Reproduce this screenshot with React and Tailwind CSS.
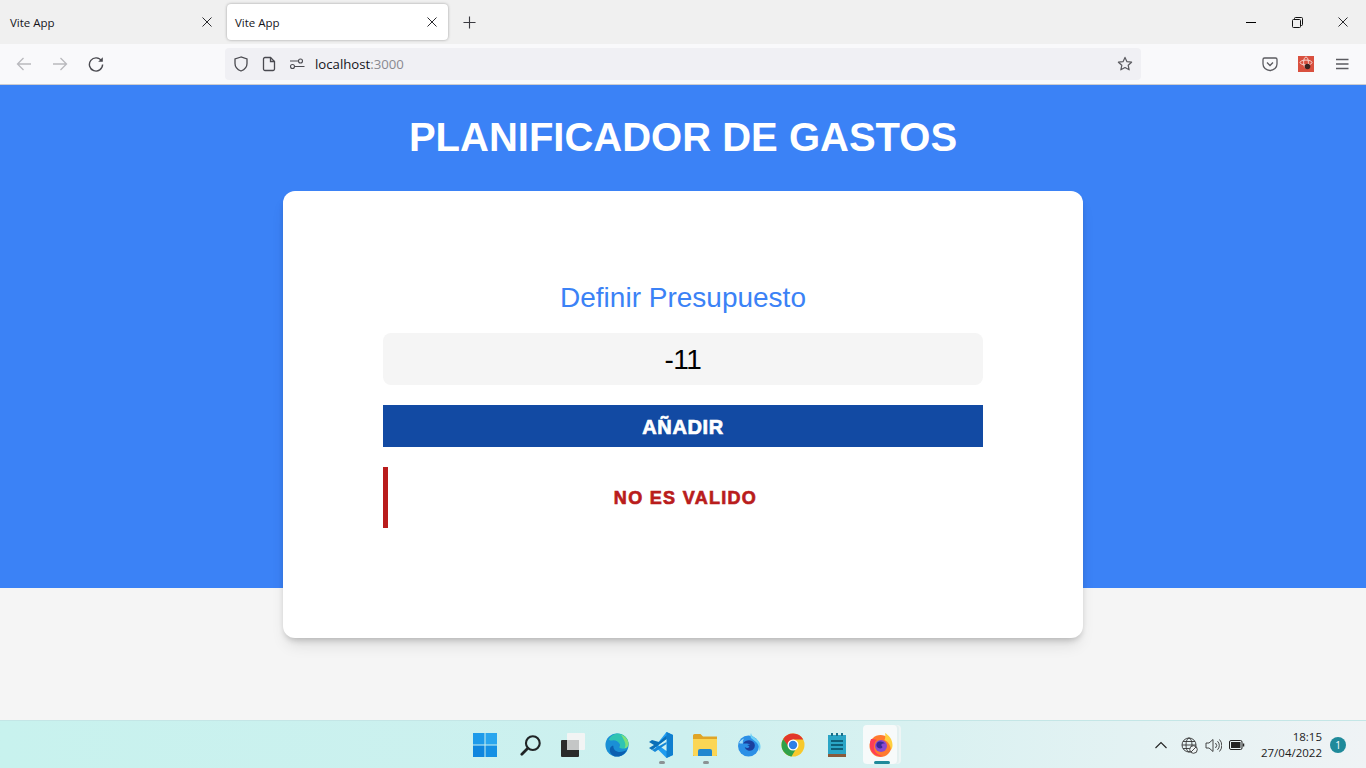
import React from 'react';

const XIcon = ({ size = 10, width = 1 }) => (
  <svg width={size} height={size} viewBox="0 0 10 10" fill="none" stroke="#2a2a2e" strokeWidth={width}>
    <path d="M0.5 0.5 9.5 9.5M9.5 0.5 0.5 9.5" />
  </svg>
);

const Tab = ({ active }) => (
  <div
    className={
      active
        ? 'w-[221px] h-9 mt-1 ml-px bg-white rounded shadow-[0_0_3px_rgba(0,0,0,0.35)] flex items-center justify-between pl-2 pr-[11px]'
        : 'w-[226px] h-9 mt-1 flex items-center justify-between pl-2.5 pr-[14px]'
    }
  >
    <span className="text-[11.5px] mt-px text-[#15141a] font-['Open_Sans',sans-serif]">Vite App</span>
    <XIcon />
  </div>
);

const ToolIcon = ({ children, className = '' }) => (
  <div className={`w-9 h-8 flex items-center justify-center ${className}`}>{children}</div>
);

const BrowserChrome = () => (
  <div className="h-[85px] shrink-0 border-b border-[#ccccd0]">
    <div className="h-11 bg-[#f0f0f0] flex">
      <Tab />
      <Tab active />
      <div className="w-[42px] h-11 flex items-center justify-center">
        <svg width="13" height="13" viewBox="0 0 14 14" stroke="#3a3a40" strokeWidth="1.2">
          <path d="M7 0.5v13M0.5 7h13" />
        </svg>
      </div>
      <div className="ml-auto flex items-center h-11">
        <div className="w-[46px] flex justify-center">
          <div className="w-2.5 h-px bg-black" />
        </div>
        <div className="w-[46px] flex justify-center">
          <svg width="11" height="11" viewBox="0 0 11 11" fill="none" stroke="#111" strokeWidth="1">
            <rect x="0.5" y="2.5" width="8" height="8" rx="1" />
            <path d="M2.5 2.5V1.5a1 1 0 0 1 1-1h6a1 1 0 0 1 1 1v6a1 1 0 0 1-1 1H8.5" />
          </svg>
        </div>
        <div className="w-[46px] flex justify-center">
          <XIcon size={10} width={1} />
        </div>
      </div>
    </div>
    <div className="h-10 bg-[#f9f9fb] flex items-center pl-1.5">
      <ToolIcon>
        <svg width="16" height="16" viewBox="0 0 16 16" fill="none" stroke="#b9b9bd" strokeWidth="1.3">
          <path d="M15 8H1.5M7.5 2 1.5 8l6 6" />
        </svg>
      </ToolIcon>
      <ToolIcon>
        <svg width="16" height="16" viewBox="0 0 16 16" fill="none" stroke="#b9b9bd" strokeWidth="1.3">
          <path d="M1 8h13.5M8.5 2l6 6-6 6" />
        </svg>
      </ToolIcon>
      <ToolIcon>
        <svg width="16" height="16" viewBox="0 0 16 16" fill="none" stroke="#4a4a50" strokeWidth="1.4">
          <path d="M13.6 5A6.6 6.6 0 1 0 14.6 8.6" />
          <path d="M14.8 1.2v4.6h-4.6z" fill="#4a4a50" stroke="none" />
        </svg>
      </ToolIcon>
      <div className="w-[916px] h-8 ml-[111px] bg-[#f0f0f4] rounded flex items-center">
        <div className="w-[32px] flex justify-center">
          <svg width="16" height="16" viewBox="0 0 16 16" fill="none" stroke="#4a4a50" strokeWidth="1.3">
            <path d="M8 1 2 3v4.5c0 3.6 2.6 6.2 6 7.5 3.4-1.3 6-3.9 6-7.5V3z" />
          </svg>
        </div>
        <div className="w-[24px] flex justify-center">
          <svg width="14" height="16" viewBox="0 0 14 16" fill="none" stroke="#4a4a50" strokeWidth="1.3">
            <path d="M3 1.500h5.500L12.500 5.500V13a1.500 1.500 0 0 1-1.500 1.500H3A1.500 1.500 0 0 1 1.500 13V3A1.500 1.500 0 0 1 3 1.500z" />
            <path d="M8.500 1.500v4h4" />
          </svg>
        </div>
        <div className="w-[32px] flex justify-center">
          <svg width="16" height="12" viewBox="0 0 16 12" fill="none" stroke="#4a4a50" strokeWidth="1.100">
            <circle cx="11.500" cy="3" r="2" />
            <circle cx="3.500" cy="8.500" r="2" />
            <path d="M1 3h8M6 8.500h9.500" />
          </svg>
        </div>
        <span className="ml-[2px] mt-px text-[13.2px] text-[#15141a] font-['Open_Sans',sans-serif]">
          localhost<span className="text-[#8a8a90]">:3000</span>
        </span>
        <div className="ml-auto mr-2 w-4 flex justify-center">
          <svg width="18" height="18" viewBox="0 0 17 17" fill="none" stroke="#5b5b60" strokeWidth="1.300">
            <path d="M8.500 1.500l2.100 4.500 4.900.6-3.600 3.300 1 4.800-4.400-2.400-4.400 2.400 1-4.800-3.600-3.300 4.900-.6z" strokeLinejoin="round" />
          </svg>
        </div>
      </div>
      <div className="ml-[111px] w-9 flex justify-center">
        <svg width="16" height="16" viewBox="0 0 16 16" fill="none" stroke="#5b5b60" strokeWidth="1.300">
          <path d="M2.500 2h11A1.500 1.500 0 0 1 15 3.500V8a7 6.500 0 0 1-14 0V3.500A1.500 1.500 0 0 1 2.500 2z" />
          <path d="M5 6.500 8 9.500l3-3" />
        </svg>
      </div>
      <div className="w-9 flex justify-center">
        <svg width="16" height="16" viewBox="0 0 16 16">
          <rect width="16" height="16" fill="#d9503f" />
          <ellipse cx="8" cy="6.500" rx="6" ry="2.400" fill="none" stroke="#f8e0dc" strokeWidth="0.900" />
          <ellipse cx="8" cy="6.500" rx="2.400" ry="5.500" fill="none" stroke="#f8e0dc" strokeWidth="0.900" />
          <circle cx="9.500" cy="10.500" r="2.800" fill="#3a2320" />
        </svg>
      </div>
      <div className="w-9 flex justify-center">
        <svg width="14" height="12" viewBox="0 0 14 12" stroke="#5b5b60" strokeWidth="1.300">
          <path d="M1 1.500h12.500M1 6h12.500M1 10.500h12.500" />
        </svg>
      </div>
    </div>
  </div>
);

const TaskIcon = ({ children, dot, active }) => (
  <div className="relative w-11 h-12 flex items-center justify-center">
    {active && (
      <div className="absolute left-[4px] top-[4px] w-[34px] h-[39px] bg-[#f7fafa] rounded shadow-[2px_0_0_#e4f0f0,4px_0_0_#eef5f5]" />
    )}
    <div className="relative">{children}</div>
    {dot && <div className="absolute bottom-[5px] left-[20px] w-[6px] h-[3px] rounded-full bg-[#8b9294]" />}
    {active && <div className="absolute bottom-[5px] left-[15px] w-4 h-[3px] rounded-full bg-[#1f8a9a]" />}
  </div>
);

const Taskbar = () => (
  <div className="h-12 shrink-0 grid grid-cols-[1fr_auto_1fr] bg-gradient-to-r from-[#c8f2ee] via-[#cdf0ef] to-[#eff3f5] border-t border-[#c4e6e6]">
    <div />
    <div className="flex">
      <TaskIcon>
        <svg width="24" height="24" viewBox="0 0 24 24">
          <path d="M0 0h11.500v11.500H0z" fill="#1e9bea" />
          <path d="M12.500 0H24v11.500H12.500z" fill="#2aa6ee" />
          <path d="M0 12.500h11.500V24H0z" fill="#0f86de" />
          <path d="M12.500 12.500H24V24H12.500z" fill="#1590e4" />
        </svg>
      </TaskIcon>
      <TaskIcon>
        <svg className="ml-1" width="22" height="24" viewBox="0 0 24 24" fill="none" stroke="#202426">
          <circle cx="14" cy="10" r="7.500" strokeWidth="2.300" />
          <path d="M8.500 15.500 2 22" strokeWidth="3" strokeLinecap="round" />
        </svg>
      </TaskIcon>
      <TaskIcon>
        <svg width="24" height="24" viewBox="0 0 24 24">
          <rect x="0" y="7" width="18" height="17" rx="1" fill="#2a2a2a" />
          <rect x="6" y="0" width="18" height="17" rx="1" fill="#f2f4f4" />
          <rect x="6" y="7" width="12" height="10" fill="#c4c6c6" />
        </svg>
      </TaskIcon>
      <TaskIcon>
        <svg width="24" height="24" viewBox="0 0 26 26">
          <circle cx="13" cy="13" r="12.500" fill="#1a8fd6" />
          <path d="M4 7C7 2 11 .5 14 .5c6 0 11.500 5 11.500 11 0 4-3 5.500-6 5.500-1.800 0-3.500-.5-4.200-1.500 1-1 1.200-2.200.7-3.500C14.500 9 11 7.500 8 8c-1.500.2-3 .3-4-1z" fill="#2fc4b2" />
          <path d="M17 1.500c5 1.500 8.500 6 8.500 10 0 3-2 5-4.500 5.300 1.500-2 1.500-5 0-8-1-3-2.500-5.500-4-7.300z" fill="#7fe07a" />
          <path d="M9 14c0 4 3 6.500 7 6.500 3 0 6-1 8-3-2 4.500-6 8-11 8-2 0-4-.6-5.500-2-2.500-2-3-6-1.500-8 .8-1 2-1.800 3-1.500z" fill="#0c5fb0" />
        </svg>
      </TaskIcon>
      <TaskIcon dot>
        <svg width="24" height="26" viewBox="0 0 24 26">
          <path d="M17.500 0 24 3v20l-6.500 3L6 14.500z" fill="#1f9cf0" />
          <path d="M17.500 0v26l6.500-3V3z" fill="#0f7fcf" />
          <path d="M17.500 7 9 13l8.500 6z" fill="#cdf0ef" />
          <path d="M3 8 0 10l5 3-5 3 3 2 14.500-11V3.500L10 10z" fill="#0a6fb8" />
          <path d="M3 18l3 2 11.500-8v-2z" fill="#1587d8" />
        </svg>
      </TaskIcon>
      <TaskIcon dot>
        <svg width="24" height="22" viewBox="0 0 24 22">
          <path d="M0 1.500A1.500 1.500 0 0 1 1.500 0h6L10 2.500h14V22H0z" fill="#e0a526" />
          <path d="M0 5h24v15.500A1.500 1.500 0 0 1 22.500 22h-21A1.500 1.500 0 0 1 0 20.500z" fill="#fbd655" />
          <path d="M5 17a2 2 0 0 1 2-2h10a2 2 0 0 1 2 2v5H5z" fill="#2187cf" />
        </svg>
      </TaskIcon>
      <TaskIcon>
        <svg width="24" height="24" viewBox="0 0 24 24">
          <circle cx="11.500" cy="13" r="10.500" fill="#2b8fe6" />
          <path d="M14 0c.5 2.500 2 3.500 4 5 3 2 5.500 4.500 5.500 8.500 0 2-.5 3.500-1.500 5 .5-3 0-6-2-8.500-1.500-2-4-3-6-5-.8-1.500-.7-3.500 0-5z" fill="#6bd0f7" />
          <path d="M6 10.500C8 7.500 12 6.500 15 8c2.500 1.300 3.500 4 2.500 6.500-1 2.500-4 4-6.500 3-2-.7-3-2-3.200-3.500 1.200 1 3 1.300 4 .5s.5-1.700-1.500-2.200c1-.7 2-.5 3-.3-1-1.500-4-1.800-7.800-1.500z" fill="#1a3f9e" />
          <path d="M2 10c1-2 3-4 5-4.500-1 1.500-1.500 3-1 5-1.500.2-3 .2-4-.5z" fill="#9fdcf8" />
        </svg>
      </TaskIcon>
      <TaskIcon>
        <svg width="24" height="24" viewBox="0 0 24 24">
          <circle cx="12" cy="12" r="11.500" fill="#f7c92c" />
          <path d="M12 .5A11.500 11.500 0 0 0 2.200 6L7 14l5-7.500h10.300A11.500 11.500 0 0 0 12 .5z" fill="#e2372b" />
          <path d="M2.200 6A11.500 11.500 0 0 0 10.500 23.400L15.500 15H8.500z" fill="#2fa14a" />
          <circle cx="12" cy="12" r="5.500" fill="#fff" />
          <circle cx="12" cy="12" r="4.200" fill="#2f7fe6" />
        </svg>
      </TaskIcon>
      <TaskIcon>
        <svg width="18" height="24" viewBox="0 0 18 24">
          <rect x="0" y="2" width="18" height="20" fill="#2aa5c6" />
          <rect x="0" y="21" width="18" height="3" fill="#8a5a3a" />
          <path d="M3 0h2v3H3zM8 0h2v3H8zM13 0h2v3h-2z" fill="#1b6f8a" />
          <path d="M3 7h12v2H3zM3 11h12v2H3zM3 15h12v2H3z" fill="#0e5f7a" />
        </svg>
      </TaskIcon>
      <TaskIcon active>
        <svg width="24" height="24" viewBox="0 0 24 24">
          <circle cx="11.500" cy="13" r="11" fill="#ff7a2f" />
          <path d="M16 0c3.500 2 7.500 6 7.500 12 0 2-.5 3.500-1.500 5-.5-5-3-8.500-6.500-10 1-2 1-4.500.5-7z" fill="#ffcf3f" />
          <path d="M2 6C.5 9 .5 14 2 17c2 5 8 7 12 6-5-.5-9-4-9-9 0-3 1-6 3-7C6 6 4 6 2 6z" fill="#ff3d57" />
          <circle cx="12" cy="13" r="6" fill="#8a4ad0" />
          <path d="M8 10c2-2 6-2 8 1-2-1-3 0-4 1 1 1 2 2 1 3-2 1-5 0-5.500-2-.3-1 0-2 .5-3z" fill="#3a2a9a" />
        </svg>
      </TaskIcon>
    </div>
    <div className="flex items-center justify-end">
      <svg width="12" height="8" viewBox="0 0 12 8" fill="none" stroke="#222" strokeWidth="1.100">
        <path d="M.5 7 6 1.500 11.500 7" />
      </svg>
      <svg className="ml-[14px]" width="17" height="17" viewBox="0 0 17 17" fill="none" stroke="#333" strokeWidth="0.900">
        <circle cx="8" cy="8" r="7" />
        <ellipse cx="8" cy="8" rx="3" ry="7" />
        <path d="M1 8h14M2 4.500h12M2 11.500h12" />
        <circle cx="12.500" cy="12.500" r="3.800" fill="#eef3f4" />
        <path d="M10 15l5-5" />
      </svg>
      <svg className="ml-[7px]" width="17" height="15" viewBox="0 0 17 15" fill="none" stroke="#333" strokeWidth="0.900">
        <path d="M1 5h3l4-3.500v12L4 10H1z" />
        <path d="M10.500 5a3.500 3.500 0 0 1 0 5M12.500 3.200a6 6 0 0 1 0 8.600M14.500 1.500a9 9 0 0 1 0 12" />
      </svg>
      <svg className="ml-[7px]" width="16" height="10" viewBox="0 0 16 10" fill="none" stroke="#222" strokeWidth="1">
        <rect x="0.500" y="0.500" width="12.500" height="9" rx="1.500" />
        <rect x="2" y="2" width="9.500" height="6" fill="#222" stroke="none" />
        <path d="M14.500 3.500v3" strokeWidth="1.500" />
      </svg>
      <div className="ml-4 text-right text-[11.5px] leading-[16px] text-[#1c1c1c] font-['Open_Sans',sans-serif]">
        <div>18:15</div>
        <div>27/04/2022</div>
      </div>
      <div className="ml-2 mr-5 w-4 h-4 rounded-full bg-[#1f8a9a] text-white text-[10px] flex items-center justify-center font-['Open_Sans',sans-serif]">
        1
      </div>
    </div>
  </div>
);

export default function App() {
  return (
    <div className="h-screen flex flex-col overflow-hidden bg-[#f5f5f5] font-['Liberation_Sans',Arial,sans-serif]">
      <BrowserChrome />
      <div className="flex-1">
        <header className="h-[503px] bg-[#3b82f6] pt-[27px]">
          <h1 className="text-center text-[40px] leading-[50px] font-bold text-white uppercase">
            Planificador de gastos
          </h1>
        </header>
        <div className="w-[800px] mx-auto -mt-[397px] relative bg-white rounded-xl shadow-[0_10px_15px_-3px_rgba(0,0,0,0.1),0_4px_6px_-2px_rgba(0,0,0,0.2)] h-[447px] px-[100px] pt-[86px]">
          <p className="text-center text-[28px] leading-[42px] text-[#3b82f6]">Definir Presupuesto</p>
          <div className="mt-[14px] h-[52px] bg-[#f5f5f5] rounded-lg flex items-center justify-center text-[28px] text-black tracking-[-0.5px]">
            <span className="mt-px">-11</span>
          </div>
          <button className="mt-5 w-full h-[42px] bg-[#124aa3] text-white text-xl font-black uppercase tracking-[0.6px] [-webkit-text-stroke:0.7px_white]">
            <span className="block mt-px">Añadir</span>
          </button>
          <div className="mt-5 h-[61px] border-l-[5px] border-[#b91c1c] flex items-center justify-center text-[#b91c1c] text-lg font-black uppercase tracking-[1.3px] [-webkit-text-stroke:0.7px_#b91c1c]">
            <span className="mt-px">No es valido</span>
          </div>
        </div>
      </div>
      <Taskbar />
    </div>
  );
}
